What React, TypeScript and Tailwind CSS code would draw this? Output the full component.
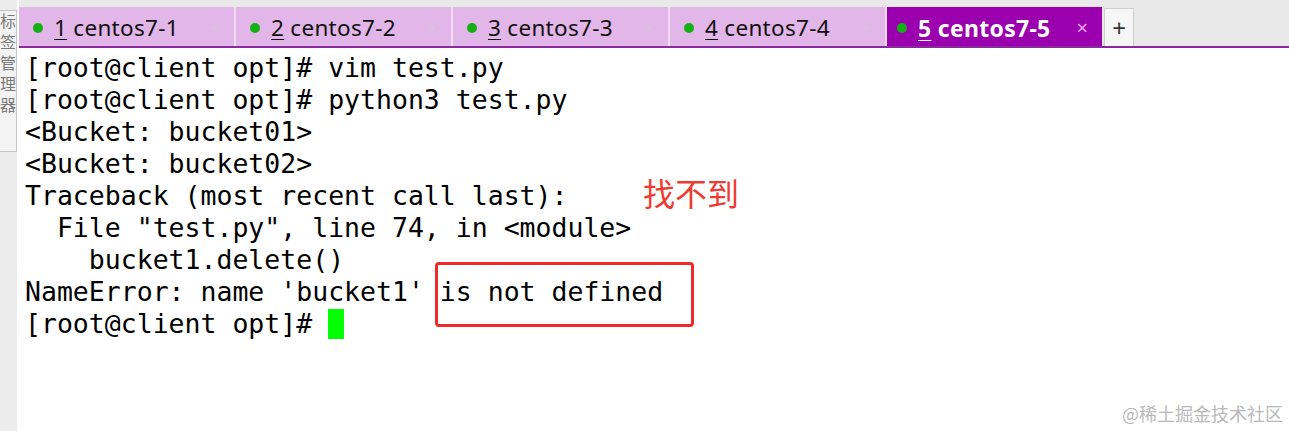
const tabs = [
  { n: "1", label: "centos7-1" },
  { n: "2", label: "centos7-2" },
  { n: "3", label: "centos7-3" },
  { n: "4", label: "centos7-4" },
]

const lines = [
  "[root@client opt]# vim test.py",
  "[root@client opt]# python3 test.py",
  "<Bucket: bucket01>",
  "<Bucket: bucket02>",
  "Traceback (most recent call last):",
  "  File \"test.py\", line 74, in <module>",
  "    bucket1.delete()",
  "NameError: name 'bucket1' is not defined",
]

export default function App() {
  return (
    <div className="relative w-[1289px] h-[431px] overflow-hidden bg-white flex">
      {/* left session manager strip */}
      <div className="w-[17px] h-full bg-[#ececec] pt-[10px] shrink-0">
        <div className="h-[142px] bg-[#f3f3f3] border border-[#c4c4c4] border-l-0 overflow-hidden flex justify-center">
          <span className="[writing-mode:vertical-rl] text-[16px] leading-[16px] text-[#7a7a7a] tracking-[5px] pt-[2px] font-['Noto_Sans_CJK_SC',sans-serif]">
            标签管理器
          </span>
        </div>
      </div>

      <div className="flex-1 flex flex-col">
        {/* tab bar */}
        <div className="h-[48px] bg-[#e9e9e9] border-b-2 border-[#8b2a9d] flex items-end font-['Noto_Sans',sans-serif] ml-[2px]">
          {tabs.map((t) => (
            <div
              key={t.n}
              className="w-[217px] h-[39px] bg-[#e2b6e8] border-r-2 border-[#efdcf1] flex items-center pl-[14px] pr-[14px] pt-[3px]"
            >
              <span className="w-[10px] h-[10px] rounded-full bg-[#12b012]" />
              <span className="ml-[11px] text-[22.5px] text-[#111] leading-none tracking-[0.3px]">
                <span className="underline underline-offset-[3px] decoration-1">{t.n}</span> {t.label}
              </span>
              <span className="ml-auto text-[16px] text-[#d9c2dd]">×</span>
            </div>
          ))}
          <div className="w-[215px] h-[39px] bg-[#9a00ad] flex items-center pl-[10px] pr-[14px] pt-[3px]">
            <span className="w-[10px] h-[10px] rounded-full bg-[#12b012]" />
            <span className="ml-[11px] text-[23px] text-white font-bold leading-none tracking-[0.3px]">
              <span className="underline underline-offset-[3px] decoration-1">5</span> centos7-5
            </span>
            <span className="ml-auto text-[20px] text-[#e7a6ef] leading-none">×</span>
          </div>
          <div className="ml-[2px] w-[30px] h-[38px] bg-[#f6f6f6] border border-b-0 border-[#cfcfcf] flex items-center justify-center text-[24px] text-[#333] leading-none">
            +
          </div>
        </div>

        {/* terminal */}
        <div className="flex-1 pl-[8px] pt-[4px] font-['DejaVu_Sans_Mono',monospace] text-[26.5px] leading-[32px] text-black whitespace-pre">
          {lines.map((l, i) => (
            <div key={i}>{l}</div>
          ))}
          <div className="flex items-center">
            <span>[root@client opt]# </span>
            <span className="inline-block w-[16px] h-[30px] bg-[#00ff00]" />
          </div>
        </div>
      </div>

      {/* annotations */}
      <div className="absolute left-[435px] top-[262px] w-[259px] h-[65px] border-[3px] border-[#f02a2a] rounded-[4px]" />
      <div className="absolute left-[643px] top-[171px] text-[32px] leading-[42px] text-[#ee3b32] font-['Noto_Sans_CJK_SC',sans-serif]">
        找不到
      </div>
      <div className="absolute left-[1122px] top-[401px] text-[18px] leading-[24px] text-[#b9b9b9] font-['Noto_Sans_CJK_SC',sans-serif]">
        @稀土掘金技术社区
      </div>
    </div>
  )
}
